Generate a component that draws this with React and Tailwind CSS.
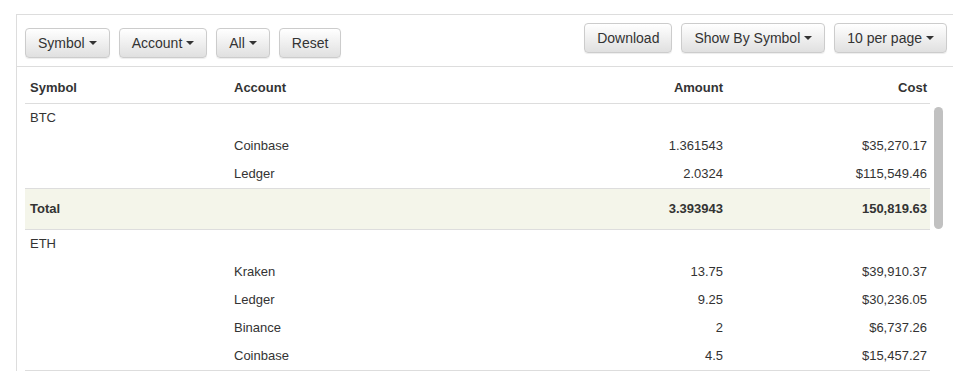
import React from "react";

const btn =
  "h-[30px] px-[12px] text-[14px] text-[#333] border border-[#ccc] rounded-[4px] bg-gradient-to-b from-white to-[#e0e0e0] shadow-[0_1px_1px_rgba(0,0,0,0.075)] flex items-center whitespace-nowrap";

function Caret() {
  return <span className="inline-block w-0 h-0 ml-[4px] border-l-[4px] border-r-[4px] border-t-[4px] border-l-transparent border-r-transparent border-t-[#333]" />;
}

const rows = [
  { type: "group", symbol: "BTC" },
  { account: "Coinbase", amount: "1.361543", cost: "$35,270.17" },
  { account: "Ledger", amount: "2.0324", cost: "$115,549.46" },
  { type: "total", amount: "3.393943", cost: "150,819.63" },
  { type: "group", symbol: "ETH" },
  { account: "Kraken", amount: "13.75", cost: "$39,910.37" },
  { account: "Ledger", amount: "9.25", cost: "$30,236.05" },
  { account: "Binance", amount: "2", cost: "$6,737.26" },
  { account: "Coinbase", amount: "4.5", cost: "$15,457.27" },
];

const cols = "grid grid-cols-[204px_204px_295px_202px] items-center";

export default function App() {
  return (
    <div className="w-[953px] h-[372px] overflow-hidden bg-white text-[13px] text-[#333]" style={{ fontFamily: '"Liberation Sans", Arial, sans-serif' }}>
      <div className="mt-[14px] ml-[16px] border-t border-l border-[#ddd]">
        <div className="h-[52px] border-b border-[#ddd] flex justify-between items-start pl-[8px] pr-[6px]">
          <div className="flex gap-[9px] mt-[13px]">
            <button className={btn}>Symbol<Caret /></button>
            <button className={btn}>Account<Caret /></button>
            <button className={btn}>All<Caret /></button>
            <button className={btn}>Reset</button>
          </div>
          <div className="flex gap-[9px] mt-[8px]">
            <button className={btn}>Download</button>
            <button className={btn}>Show By Symbol<Caret /></button>
            <button className={btn}>10 per page<Caret /></button>
          </div>
        </div>
        <div className="pl-[8px]">
          <div className={`${cols} w-[905px] h-[37px] pt-[6px] border-b border-[#ddd] font-bold`}>
            <div className="pl-[5px]">Symbol</div>
            <div className="pl-[5px]">Account</div>
            <div className="text-right pr-[5px]">Amount</div>
            <div className="text-right pr-[3px]">Cost</div>
          </div>
          <div className="flex">
            <div className="w-[905px] border-b border-[#ddd]">
              {rows.map((r, i) =>
                r.type === "group" ? (
                  <div key={i} className={`${cols} h-[28px]`}>
                    <div className="pl-[5px]">{r.symbol}</div>
                  </div>
                ) : r.type === "total" ? (
                  <div key={i} className={`${cols} h-[42px] border-y border-[#ddd] bg-[#f4f5ea] font-bold`}>
                    <div className="pl-[5px]">Total</div>
                    <div />
                    <div className="text-right pr-[5px]">{r.amount}</div>
                    <div className="text-right pr-[3px]">{r.cost}</div>
                  </div>
                ) : (
                  <div key={i} className={`${cols} h-[28px]`}>
                    <div />
                    <div className="pl-[5px]">{r.account}</div>
                    <div className="text-right pr-[5px]">{r.amount}</div>
                    <div className="text-right pr-[3px]">{r.cost}</div>
                  </div>
                )
              )}
            </div>
            <div className="w-[20px] pl-[4px] pt-[3px]">
              <div className="w-[9px] h-[122px] rounded-full bg-[#c1c1c1]" />
            </div>
          </div>
        </div>
      </div>
    </div>
  );
}
